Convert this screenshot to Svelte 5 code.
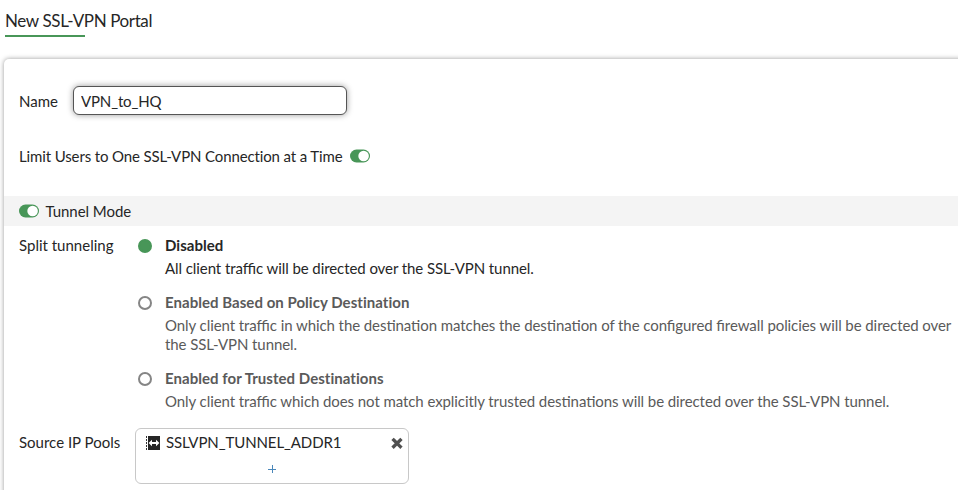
<script>
  let name = $state('VPN_to_HQ');
  const options = [
    { title: 'Disabled', text: 'All client traffic will be directed over the SSL-VPN tunnel.', on: true },
    {
      title: 'Enabled Based on Policy Destination',
      text: 'Only client traffic in which the destination matches the destination of the configured firewall policies will be directed over the SSL-VPN tunnel.'
    },
    {
      title: 'Enabled for Trusted Destinations',
      text: 'Only client traffic which does not match explicitly trusted destinations will be directed over the SSL-VPN tunnel.'
    }
  ];
</script>

{#snippet toggle()}
  <svg class="toggle" width="20" height="14" viewBox="0 0 20 14">
    <rect y="0.5" width="20" height="13" rx="6.5" fill="#489658" />
    <circle cx="13.6" cy="7" r="5.3" fill="#fff" />
  </svg>
{/snippet}

<div class="page">
  <header><h1>New SSL-VPN Portal</h1></header>
  <main>
    <div class="name-row">
      <label for="name">Name</label>
      <input id="name" bind:value={name} />
    </div>
    <div class="limit-row">
      <span>Limit Users to One SSL-VPN Connection at a Time</span>
      {@render toggle()}
    </div>
    <div class="section">
      {@render toggle()}
      <span>Tunnel Mode</span>
    </div>
    <div class="split">
      <div class="label">Split tunneling</div>
      <div class="options">
        {#each options as o}
          <div class="option" class:on={o.on}>
            <i class="radio"></i>
            <div>
              <b>{o.title}</b>
              <p>{o.text}</p>
            </div>
          </div>
        {/each}
      </div>
    </div>
    <div class="pools">
      <div class="label">Source IP Pools</div>
      <div class="box">
        <div class="item">
          <svg width="14" height="14" viewBox="0 0 14 14">
            <path d="M2 0H14v14H2z" fill="#262626" />
            <path d="M.5 0v14" stroke="#333" stroke-dasharray="2 1" />
            <path d="M2.600 7l3.400-3.200v2.300h4V3.800L13.400 7 10 10.200V7.900H6v2.300z" fill="#fff" />
          </svg>
          <span>SSLVPN_TUNNEL_ADDR1</span>
          <svg class="remove" width="12" height="12" viewBox="0 0 12 12">
            <path d="M2.700 3l6.600 6.600M9.300 3l-6.600 6.600" stroke="#505050" stroke-width="3.3" stroke-linecap="square" />
          </svg>
        </div>
        <svg class="plus" width="8" height="8" viewBox="0 0 8 8">
          <path d="M0 4.500h8M4.500 0v8" stroke="#4a87ba" />
        </svg>
      </div>
    </div>
  </main>
</div>

<style>
  :global(body) { margin: 0; background: #fff; overflow: hidden; }
  .page {
    height: 490px;
    overflow: hidden;
    font: 15px/19px Lato, "Liberation Sans", sans-serif;
    font-feature-settings: "liga" 0;
    color: #262626;
  }
  header { height: 59px; padding-left: 5px; }
  h1 {
    margin: 0;
    padding-top: 10px;
    height: 25px;
    font-size: 17px;
    line-height: 22px;
    font-weight: 400;
    letter-spacing: -0.38px;
  }
  header::after { content: ""; display: block; width: 80px; height: 2px; background: #489658; }
  main {
    box-sizing: border-box;
    height: 450px;
    margin-left: 4px;
    margin-right: -10px;
    padding-top: 27px;
    border-radius: 5px;
    background: #fff;
    box-shadow: 0 0 5px rgba(0, 0, 0, 0.4);
  }
  .name-row { display: flex; align-items: center; height: 29px; padding-left: 15px; }
  .name-row label { width: 54px; padding-top: 2px; }
  input {
    box-sizing: border-box;
    width: 274px;
    height: 29px;
    margin: 0;
    padding: 0 7px;
    border: 1px solid #555;
    border-radius: 6px;
    font: inherit;
    color: inherit;
    letter-spacing: -0.15px;
    outline: none;
    box-shadow: 0 0 6px rgba(0, 0, 0, 0.4);
  }
  .limit-row { display: flex; align-items: center; gap: 7.5px; height: 20px; margin-top: 31px; padding-left: 15px; }
  .limit-row span { letter-spacing: -0.125px; }
  .section {
    display: flex;
    align-items: center;
    gap: 6.5px;
    height: 30px;
    margin-top: 30px;
    padding-left: 15px;
    background: #f4f4f4;
  }
  .section span { letter-spacing: -0.05px; }
  .toggle { display: block; }
  .split { display: flex; padding: 10px 0 0 15px; }
  .label { width: 116px; flex: none; }
  .options { width: 818px; padding-left: 3px; }
  .option { display: flex; margin-bottom: 15px; color: #5a5a5a; }
  .option.on { color: #262626; }
  .radio {
    box-sizing: border-box;
    flex: none;
    width: 14px;
    height: 14px;
    margin: 3px 13px 0 0;
    border: 2px solid #858585;
    border-radius: 50%;
  }
  .on .radio { background: #489658; border-color: #489658; }
  b { display: block; letter-spacing: 0.04px; }
  p { margin: 4px 0 0; letter-spacing: -0.077px; font-feature-settings: "liga" 1; }
  .pools { display: flex; padding: 2px 0 0 15px; }
  .pools .label { padding-top: 5px; }
  .box {
    box-sizing: border-box;
    width: 274px;
    height: 56px;
    border: 1px solid #c8c8c8;
    border-radius: 6px;
  }
  .item { display: flex; align-items: center; height: 27px; padding: 0 5px 0 10px; }
  .item span { margin-left: 6px; letter-spacing: -0.1px; }
  .remove { margin-left: auto; }
  .plus { display: block; margin: 9px auto 0; }
</style>
